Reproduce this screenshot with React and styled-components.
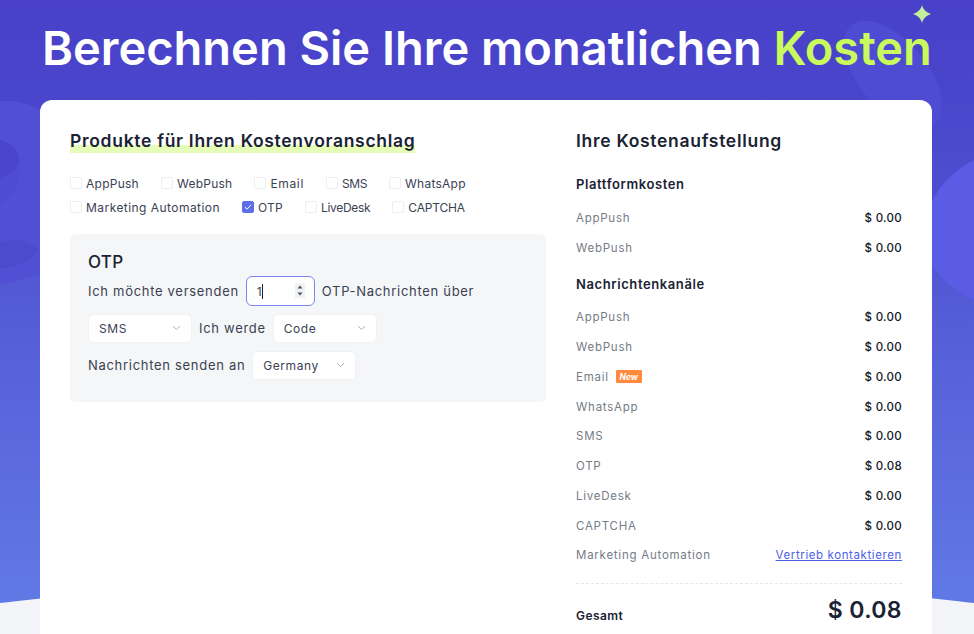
import React from "react";
import styled, { createGlobalStyle } from "styled-components";

const Global = createGlobalStyle`
  html, body { margin: 0; padding: 0; height: 100%; overflow: hidden; }
  body { font-family: Inter, "Noto Sans", "Liberation Sans", sans-serif; color: #1a2233; }
  * { box-sizing: border-box; }
`;

const Page = styled.div`
  position: relative;
  width: 974px;
  height: 634px;
  overflow: hidden;
  background: linear-gradient(180deg, #4840c9 0%, #4a48cc 20%, #5a66dc 65%, #617ce6 100%);
`;
const Decor = styled.svg`
  position: absolute;
  inset: 0;
  width: 974px;
  height: 634px;
`;
const Sparkle = styled.svg`
  position: absolute;
  left: 913px;
  top: 5px;
  width: 18px;
  height: 18px;
`;
const Content = styled.div`
  position: relative;
  padding: 0 42px 0 40px;
`;
const Title = styled.h1`
  margin: 0;
  height: 100px;
  padding: 18px 0 0 2px;
  font-size: 47px;
  line-height: 60px;
  font-weight: 600;
  color: #fff;
  white-space: nowrap;
  letter-spacing: 0;
`;
const Accent = styled.span`
  color: #c9f95c;
`;
const Card = styled.main`
  display: grid;
  grid-template-columns: 476px 326px;
  column-gap: 30px;
  width: 892px;
  height: 560px;
  padding: 30px;
  background: #fff;
  border-radius: 12px;
`;
const Heading = styled.h2`
  display: inline-block;
  margin: 0;
  font-size: 17.5px;
  line-height: 22px;
  font-weight: 600;
  color: #1a2233;
  letter-spacing: 0.7px;
  white-space: nowrap;
`;
const Marked = styled(Heading)`
  padding-bottom: 1px;
  background: linear-gradient(#e6fdba, #e6fdba) left bottom / 100% 8px no-repeat;
`;
const Checks = styled.div`
  display: flex;
  flex-direction: column;
  gap: 6px;
  margin-top: 21px;
`;
const CheckRow = styled.div`
  display: flex;
  height: 18px;
  gap: 22px;
`;
const Check = styled.label`
  display: flex;
  align-items: center;
  gap: 4px;
  font-size: 12px;
  letter-spacing: ${p => p.$track ?? 0.25}px;
  color: #3a4252;
  white-space: nowrap;
`;
const Box = styled.span`
  display: flex;
  align-items: center;
  justify-content: center;
  width: 12px;
  height: 12px;
  border-radius: 2px;
  background: ${p => (p.$on ? "#5a6fe8" : "#fff")};
  border: 1px solid ${p => (p.$on ? "#5a6fe8" : "#eceef2")};
`;
const Panel = styled.section`
  margin-top: 18px;
  height: 168px;
  padding: 16px 18px;
  background: #f5f6f8;
  border-radius: 6px;
`;
const PanelTitle = styled.div`
  font-size: 17px;
  line-height: 24px;
  font-weight: 500;
  letter-spacing: 0.3px;
  color: #1a2233;
`;
const Line = styled.div`
  display: flex;
  align-items: center;
  gap: 7px;
  height: 30px;
  margin-top: ${p => p.$mt}px;
  font-size: 13px;
  letter-spacing: 0.7px;
  color: #3a4252;
  white-space: nowrap;
`;
const NumberBox = styled.div`
  position: relative;
  display: flex;
  align-items: center;
  width: 69px;
  height: 30px;
  padding-left: 10px;
  background: #fff;
  border: 1px solid #7c86f0;
  border-radius: 6px;
  font-size: 12px;
  color: #3a4252;
`;
const Caret = styled.span`
  width: 1px;
  height: 15px;
  margin-left: 0;
  background: #1a2233;
`;
const Spinner = styled.svg`
  position: absolute;
  right: 9px;
  top: 6px;
  width: 10px;
  height: 15px;
`;
const Select = styled.div`
  display: flex;
  align-items: center;
  justify-content: space-between;
  width: 104px;
  height: 29px;
  padding: 0 10px;
  background: #fff;
  border: 1px solid #f0f1f4;
  border-radius: 5px;
  font-size: 12px;
  letter-spacing: 0.55px;
  color: #3a4252;
`;
const Chevron = styled.svg`
  width: 9px;
  height: 6px;
`;
const Subhead = styled.h3`
  margin: ${p => p.$mt}px 0 0;
  font-size: 13px;
  line-height: 18px;
  font-weight: 600;
  letter-spacing: 0.6px;
  color: #1a2233;
`;
const Rows = styled.div`
  display: flex;
  flex-direction: column;
  margin-top: 10px;
`;
const Row = styled.div`
  display: flex;
  align-items: center;
  justify-content: space-between;
  height: 29.75px;
`;
const Label = styled.span`
  display: flex;
  align-items: center;
  gap: 7px;
  font-size: 11.5px;
  letter-spacing: 0.75px;
  color: #757b87;
`;
const Value = styled.span`
  font-size: 11.5px;
  letter-spacing: 0.3px;
  font-weight: 450;
  color: #111827;
`;
const Badge = styled.span`
  display: inline-flex;
  align-items: center;
  justify-content: center;
  width: 26px;
  height: 13px;
  background: #ff8a3d;
  border-radius: 1px;
  font-size: 8.5px;
  font-style: italic;
  font-weight: 700;
  letter-spacing: 0;
  color: #fff;
`;
const Link = styled.a`
  font-size: 11.5px;
  letter-spacing: 0.6px;
  color: #4f5fe8;
  text-decoration: underline;
`;
const Divider = styled.div`
  margin-top: 13px;
  border-top: 1px dashed #e6e8ec;
`;
const Total = styled.div`
  display: flex;
  align-items: flex-end;
  justify-content: space-between;
  height: 41px;
`;
const TotalLabel = styled.span`
  font-size: 12px;
  font-weight: 600;
  letter-spacing: 0.45px;
  line-height: 18px;
  color: #1a2233;
`;
const TotalValue = styled.span`
  font-size: 23px;
  font-weight: 600;
  letter-spacing: 0.4px;
  line-height: 30px;
  color: #1a2233;
`;

const Tick = () => (
  <svg width="8" height="8" viewBox="0 0 8 8" fill="none">
    <path d="M1 4.2 3.1 6.2 7 1.8" stroke="#fff" strokeWidth="1" />
  </svg>
);
const Arrow = () => (
  <Chevron viewBox="0 0 9 6" fill="none">
    <path d="M1 1l3.5 3.6L8 1" stroke="#a8adb7" strokeWidth="0.9" />
  </Chevron>
);
const Item = ({ on, track, children }) => (
  <Check $track={track}>
    <Box $on={on}>{on && <Tick />}</Box>
    {children}
  </Check>
);
const Cost = ({ label, value = "$ 0.00", badge }) => (
  <Row>
    <Label>
      {label}
      {badge && <Badge>New</Badge>}
    </Label>
    <Value>{value}</Value>
  </Row>
);

export default function App() {
  return (
    <Page>
      <Global />
      <Decor viewBox="0 0 974 634" fill="none">
        <path d="M0 101C18 100 34 104 46 116L60 270 0 285Z" fill="#5150d4" />
        <path d="M0 140C12 142 20 152 19 162 16 172 8 176 0 178Z" fill="#4a45cb" />
        <path d="M0 178C10 176 18 170 20 160 22 180 14 195 0 205Z" fill="#4e4cd0" />
        <path d="M0 243C12 238 30 240 38 250 30 262 14 268 0 268Z" fill="#4c4acd" />
        <ellipse cx="893" cy="75" rx="65" ry="34" transform="rotate(50 893 75)" fill="#4e4cd2" />
        <path d="M974 160C954 170 940 185 930 205L930 262C940 278 955 292 974 300Z" fill="#5a5ce6" />
        <ellipse cx="487" cy="790" rx="1000" ry="214" fill="#f4f5f9" />
      </Decor>
      <Sparkle viewBox="0 0 18 18">
        <path d="M9 0C10 4 13 7.500 18 9 13 10.500 10 14 9 18 8 14 5 10.500 0 9 5 7.500 8 4 9 0Z" fill="#c4ee9c" />
      </Sparkle>
      <Content>
        <Title>
          Berechnen Sie Ihre monatlichen <Accent>Kosten</Accent>
        </Title>
        <Card>
          <div>
            <Marked>Produkte für Ihren Kostenvoranschlag</Marked>
            <Checks>
              <CheckRow>
                <Item>AppPush</Item>
                <Item>WebPush</Item>
                <Item track={0.65}>Email</Item>
                <Item track={-0.4}>SMS</Item>
                <Item>WhatsApp</Item>
              </CheckRow>
              <CheckRow>
                <Item track={0.45}>Marketing Automation</Item>
                <Item on>OTP</Item>
                <Item track={-0.3}>LiveDesk</Item>
                <Item track={-0.2}>CAPTCHA</Item>
              </CheckRow>
            </Checks>
            <Panel>
              <PanelTitle>OTP</PanelTitle>
              <Line $mt={2}>
                Ich möchte versenden
                <NumberBox>
                  1<Caret />
                  <Spinner viewBox="0 0 10 15">
                    <rect width="10" height="15" fill="#f0f1f3" />
                    <path d="M5 2.500 7.500 5.500h-5zM5 12.500 2.500 9.500h5z" fill="#4b5563" />
                  </Spinner>
                </NumberBox>
                OTP-Nachrichten über
              </Line>
              <Line $mt={7}>
                <Select>SMS<Arrow /></Select>
                Ich werde
                <Select>Code<Arrow /></Select>
              </Line>
              <Line $mt={7}>
                Nachrichten senden an
                <Select>Germany<Arrow /></Select>
              </Line>
            </Panel>
          </div>
          <div>
            <Heading>Ihre Kostenaufstellung</Heading>
            <Subhead $mt={23}>Plattformkosten</Subhead>
            <Rows>
              <Cost label="AppPush" />
              <Cost label="WebPush" />
            </Rows>
            <Subhead $mt={12}>Nachrichtenkanäle</Subhead>
            <Rows>
              <Cost label="AppPush" />
              <Cost label="WebPush" />
              <Cost label="Email" badge />
              <Cost label="WhatsApp" />
              <Cost label="SMS" />
              <Cost label="OTP" value="$ 0.08" />
              <Cost label="LiveDesk" />
              <Cost label="CAPTCHA" />
              <Row>
                <Label>Marketing Automation</Label>
                <Link>Vertrieb kontaktieren</Link>
              </Row>
            </Rows>
            <Divider />
            <Total>
              <TotalLabel>Gesamt</TotalLabel>
              <TotalValue>$ 0.08</TotalValue>
            </Total>
          </div>
        </Card>
      </Content>
    </Page>
  );
}
